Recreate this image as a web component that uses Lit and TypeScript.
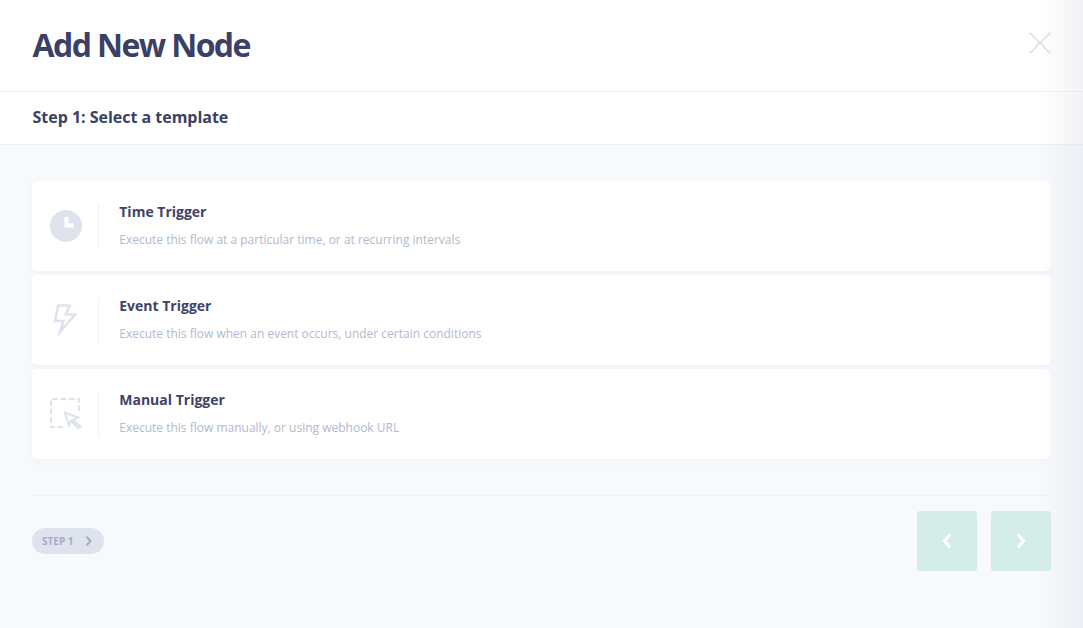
import { LitElement, html, css, svg } from "lit";
import { customElement } from "lit/decorators.js";

const clock = svg`<svg width="32" height="32" viewBox="0 0 32 32"><circle cx="16" cy="16" r="16" fill="#dfe3ee"/><path d="M14.5 7h4v6.5h5.5v4h-9.5z" fill="#fff"/></svg>`;
const bolt = svg`<svg width="32" height="36" viewBox="0 0 32 36"><path d="M8.2 3.5H19.6L15.8 12.5H25L10 30L13.5 19H5Z" fill="none" stroke="#dfe3ee" stroke-width="2.6" stroke-linejoin="miter" stroke-miterlimit="10"/></svg>`;
const manual = svg`<svg width="33" height="33" viewBox="0 0 33 33"><path d="M29 13V1H1V29H13" fill="none" stroke="#dfe3ee" stroke-width="2" stroke-dasharray="5.5 2.8"/><path d="M15 14.5L28 19.5L23 22L30.5 28.5L28.3 30L21 23L19 27.5Z" fill="#fff" stroke="#dfe3ee" stroke-width="2.2" stroke-linejoin="miter" stroke-miterlimit="6"/></svg>`;

const items = [
  { title: "Time Trigger", desc: "Execute this flow at a particular time, or at recurring intervals", icon: clock },
  { title: "Event Trigger", desc: "Execute this flow when an event occurs, under certain conditions", icon: bolt },
  { title: "Manual Trigger", desc: "Execute this flow manually, or using webhook URL", icon: manual },
];

@customElement("app-root")
export class AppRoot extends LitElement {
  static styles = css`
    :host { display: block; position: relative; width: 1083px; height: 628px; overflow: hidden; background: #f8f9fd; font-family: "Open Sans", sans-serif; color: #3b4066; }
    .head { height: 91px; background: #fff; border-bottom: 1px solid #eff0f5; display: flex; align-items: center; justify-content: space-between; padding: 0 31px 0 32.5px; }
    h1 { margin: -2px 0 0; font-size: 32px; line-height: 44px; font-weight: 700; letter-spacing: -1.6px; }
    .close { display: block; width: 24px; height: 24px; margin-top: -6px; }
    .sub { height: 50px; padding: 0 32px 2px 32.5px; background: #fff; border-bottom: 1px solid #eceef4; display: flex; align-items: center; font-size: 16px; font-weight: 700; letter-spacing: -.02px; }
    .body { padding: 36px 32px 0; }
    .list { display: flex; flex-direction: column; gap: 4px; }
    .card { height: 90px; box-sizing: border-box; background: #fff; border-radius: 5px; box-shadow: 0 2px 4px rgba(222, 225, 240, .25); display: flex; align-items: center; }
    .ico { width: 67px; height: 45px; box-sizing: border-box; border-right: 1px solid #eff0f6; display: flex; align-items: center; padding-left: 18px; flex: none; }
    .txt { padding-left: 20.25px; }
    .t { font-size: 14px; line-height: 19px; font-weight: 700; margin-top: -2px; color: #3e4369; }
    .d { font-size: 12px; line-height: 16px; color: #b3b8cf; margin-top: 11px; }
    .foot { margin-top: 36px; border-top: 1px solid #f1f2f7; padding-top: 15px; display: flex; align-items: center; justify-content: space-between; }
    .pill { width: 72px; height: 26px; border-radius: 13px; background: #dfe3ee; display: flex; align-items: center; box-sizing: border-box; padding-left: 10px; font-size: 10px; font-weight: 700; color: #a6aac3; gap: 11px; }
    .btns { display: flex; gap: 14px; }
    .btn { width: 60px; height: 60px; border-radius: 3px; background: #d4ede9; display: flex; align-items: center; justify-content: center; }
    .shade { position: absolute; top: 0; right: 0; bottom: 0; width: 44px; pointer-events: none; background: linear-gradient(to right, rgba(222, 224, 232, 0), rgba(222, 224, 232, .4)); }
  `;

  render() {
    return html`
      <div class="head">
        <h1>Add New Node</h1>
        <svg class="close" viewBox="0 0 24 24"><path d="M1.5 1.5L22.5 22.5M22.5 1.5L1.5 22.5" stroke="#dcdee6" stroke-width="1.6" fill="none"/></svg>
      </div>
      <div class="sub">Step 1: Select a template</div>
      <div class="body">
        <div class="list">
          ${items.map(i => html`
            <div class="card">
              <div class="ico">${i.icon}</div>
              <div class="txt"><div class="t">${i.title}</div><div class="d">${i.desc}</div></div>
            </div>`)}
        </div>
        <div class="foot">
          <div class="pill"><span>STEP 1</span>
            <svg width="8" height="10" viewBox="0 0 8 10"><path d="M1.5 .8L5.6 5L1.5 9.2" fill="none" stroke="#a6aac3" stroke-width="2"/></svg>
          </div>
          <div class="btns">
            <div class="btn"><svg width="12" height="16" viewBox="0 0 12 16"><path d="M9 1.5L3.5 8L9 14.5" fill="none" stroke="#fff" stroke-width="3"/></svg></div>
            <div class="btn"><svg width="12" height="16" viewBox="0 0 12 16"><path d="M3 1.5L8.5 8L3 14.5" fill="none" stroke="#fff" stroke-width="3"/></svg></div>
          </div>
        </div>
      </div>
      <div class="shade"></div>
    `;
  }
}
